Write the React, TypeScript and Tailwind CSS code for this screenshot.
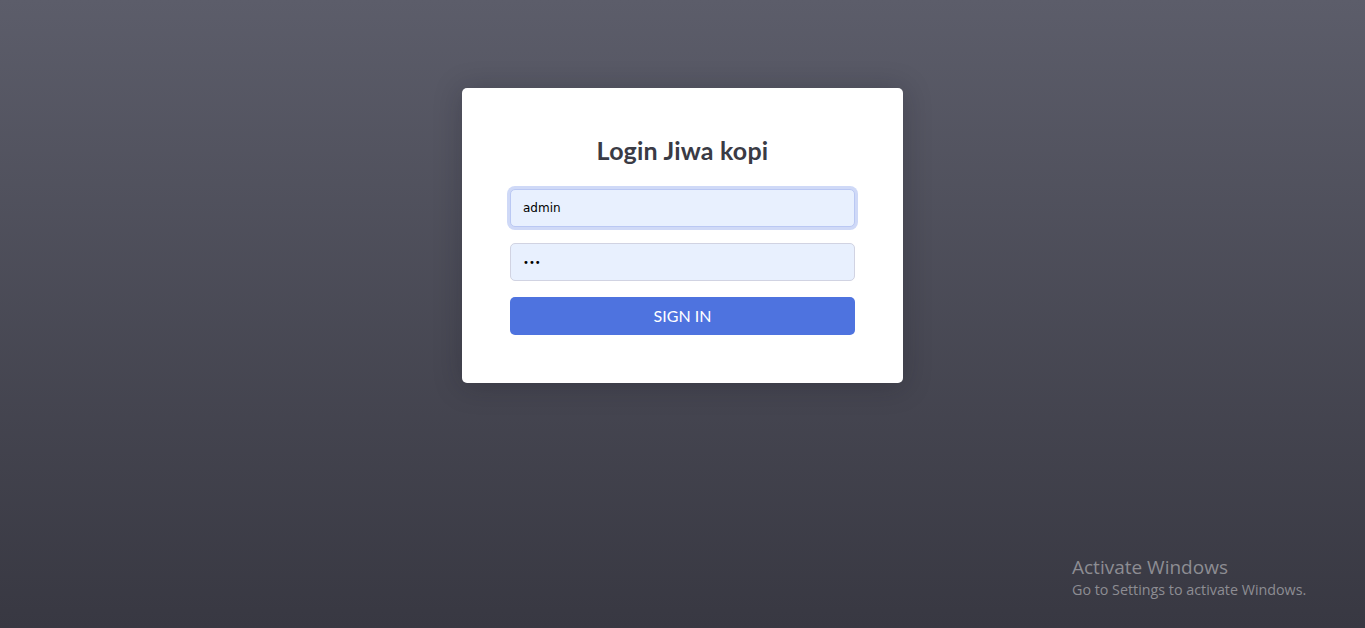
export default function App() {
  return (
    <div
      className="relative min-h-[628px] w-full bg-gradient-to-b from-[#5c5d6a] to-[#383842] pt-[88px]"
      style={{ fontFamily: "Lato, 'Open Sans', sans-serif" }}
    >
      <div className="mx-auto w-[441px] rounded-[5px] bg-white px-12 pb-12 pt-[47px] shadow-[0_0.15rem_1.75rem_0_rgba(20,20,30,0.25)]">
        <h1 className="mb-6 text-center text-[25px] font-bold leading-[30px] tracking-[0.2px] text-[#3a3b45]">
          Login Jiwa kopi
        </h1>
        <form className="flex flex-col gap-4">
          <input
            type="text"
            defaultValue="admin"
            className="h-[38px] w-full rounded-[5px] border border-[#bac8f3] bg-[#e8f0fe] px-3 text-[12px] text-black outline-none ring-[3px] ring-[#cfd9f7]"
            style={{ fontFamily: "'DejaVu Sans', Verdana, sans-serif" }}
          />
          <input
            type="password"
            defaultValue="abc"
            className="h-[38px] w-full rounded-[5px] border border-[#d1d3e2] bg-[#e8f0fe] px-3 text-[10px] text-black outline-none"
            style={{ fontFamily: "'DejaVu Sans', Verdana, sans-serif" }}
          />
          <button
            type="button"
            className="h-[38px] w-full rounded-[5px] bg-[#4e73df] text-[16px] uppercase text-white"
          >
            Sign In
          </button>
        </form>
      </div>
      <div
        className="absolute left-[1072px] top-[555px] text-[#8d8d93]"
        style={{ fontFamily: "'Open Sans', 'Noto Sans', sans-serif" }}
      >
        <div className="text-[19px] leading-[24px]">Activate Windows</div>
        <div className="text-[14.3px] leading-[22px]">Go to Settings to activate Windows.</div>
      </div>
    </div>
  );
}
